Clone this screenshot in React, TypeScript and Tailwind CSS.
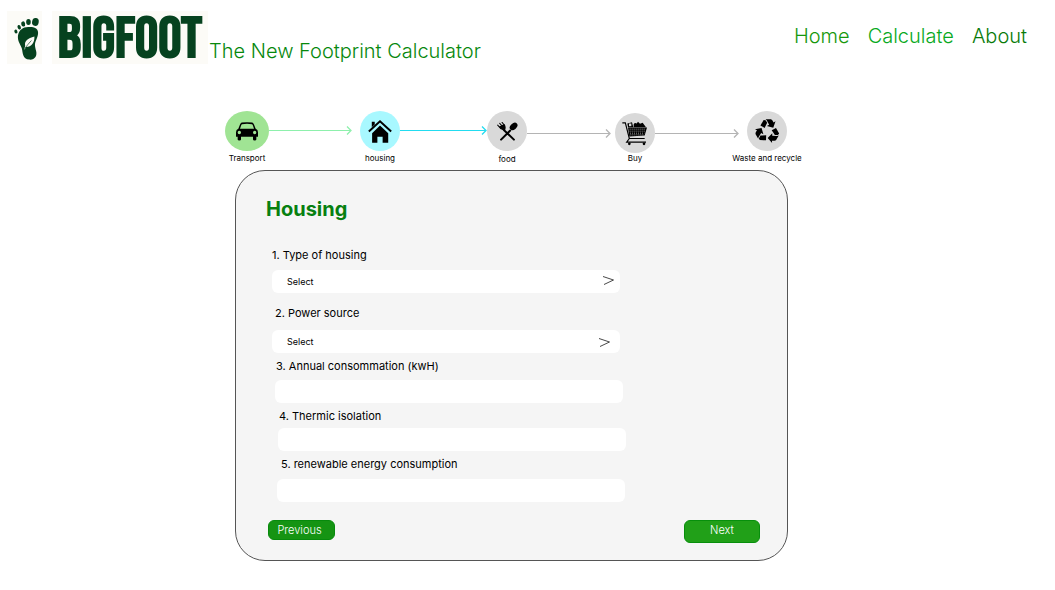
import type { ReactNode } from "react";

function FootLogo() {
  return (
    <svg viewBox="0 0 106 160" className="h-[53px] w-[35px] bg-[#fcfbf7]" aria-hidden="true">
      <g fill="#06421f">
        <ellipse cx="86" cy="33" rx="10" ry="12" transform="rotate(12 86 33)" />
        <ellipse cx="65" cy="33" rx="7" ry="9" />
        <ellipse cx="49" cy="39" rx="6" ry="8" transform="rotate(-12 49 39)" />
        <ellipse cx="37" cy="49" rx="5" ry="7" transform="rotate(-20 37 49)" />
        <ellipse cx="27" cy="62" rx="4.500" ry="6" transform="rotate(-25 27 62)" />
        <path d="M58 49C44 50 33 63 33 79C33 94 42 102 45 113C48 124 46 146 68 147C85 148 92 135 88 120C85 107 82 101 89 86C94 75 98 60 88 53C79 47 69 48 58 49Z" />
      </g>
      <path d="M83 77C63 82 52 91 55 105L52 118L58 109C74 109 84 95 83 77Z" fill="#fcfbf7" />
      <path d="M54 113Q63 101 74 89" stroke="#06421f" strokeWidth="2" fill="none" />
    </svg>
  );
}

function CarIcon() {
  return (
    <svg viewBox="0 0 66 56" className="h-[19px] w-[22px]" aria-hidden="true">
      <path
        fillRule="evenodd"
        d="M17 1Q33 -1 49 1Q52 2 54 7L59 20Q66 22 66 30V44H61V52Q61 55 56 55Q51 55 51 52V44H15V52Q15 55 10 55Q5 55 5 52V44H0V30Q0 22 7 20L12 7Q14 2 17 1ZM18 6Q16 7 15 11L12 20H54L51 11Q50 7 48 6Q33 4 18 6ZM10 26A5 5 0 1 0 10 36A5 5 0 1 0 10 26ZM56 26A5 5 0 1 0 56 36A5 5 0 1 0 56 26Z"
      />
    </svg>
  );
}

function HouseIcon() {
  return (
    <svg viewBox="0 0 72 70" className="h-[23px] w-6" aria-hidden="true">
      <path d="M11 5H20V14L11 22ZM36 17L61 40V69H44V51H28V69H12V40Z" />
      <path d="M2 35L36 4L70 35" fill="none" stroke="#000" strokeWidth="6" />
    </svg>
  );
}

function CutleryIcon() {
  return (
    <svg viewBox="0 0 62 56" className="h-[19px] w-[21px]" aria-hidden="true">
      <path d="M21 24L50 52M39 25L12 52" stroke="#000" strokeWidth="6" strokeLinecap="round" />
      <ellipse cx="49" cy="13" rx="9" ry="13" transform="rotate(48 49 13)" />
      <path
        d="M2 9L12 20M8 4L18 15M15 1L23 11"
        stroke="#000"
        strokeWidth="3"
        strokeLinecap="round"
      />
      <path d="M6 13L22 6Q27 14 25 22L20 26Q11 24 6 13Z" />
    </svg>
  );
}

function CartIcon() {
  return (
    <svg viewBox="0 0 78 74" className="h-[25px] w-[26px]" aria-hidden="true">
      <path d="M16 7L30 3L34 18H18ZM35 10Q38 3 44 7L48 2L54 8L62 5L72 18H35Z" />
      <path d="M21 7H28V15H21Z" fill="#d9d9d9" />
      <path d="M18 19H75L68 43L22 46Z" />
      <path
        d="M23 24H71M23 30H69M24 36H67M25 41H65"
        stroke="#d9d9d9"
        strokeWidth="2"
        strokeDasharray="3 3"
      />
      <path d="M1 5H10L22 52L14 63H72M22 52H68" fill="none" stroke="#000" strokeWidth="3.500" />
      <circle cx="22" cy="68" r="4" />
      <circle cx="66" cy="68" r="4" />
    </svg>
  );
}

function RecycleIcon() {
  return (
    <svg viewBox="-39 -38 78 78" className="size-[25px]" aria-hidden="true">
      {[0, 120, 240].map((angle) => (
        <g key={angle} transform={`rotate(${angle})`}>
          <path d="M-22 -18L-12 -35L-6 -34L-1 -26L-9 -10Z" />
          <path d="M-6 -37H11L15 -34L19 -27L25 -31L18 -11L-2 -16L5 -20L-2 -33Z" />
        </g>
      ))}
    </svg>
  );
}

function Arrow({ className }: { className: string }) {
  return (
    <li aria-hidden="true" className={`flex h-[11px] min-w-4 items-center ${className}`}>
      <span className="-mr-1 h-px flex-1 bg-current" />
      <svg viewBox="0 0 6 11" className="h-[11px] w-[6px] shrink-0" fill="none" stroke="currentColor">
        <path d="M1 1.500L5 5.500L1 9.500" strokeWidth="1.300" />
      </svg>
    </li>
  );
}

function Step({
  label,
  circle,
  className,
  children,
}: {
  label: string;
  circle: string;
  className: string;
  children: ReactNode;
}) {
  return (
    <li className={`flex shrink-0 flex-col items-center ${className}`}>
      <span className={`flex h-10 items-center justify-center rounded-[50%] ${circle}`}>
        {children}
      </span>
      <span className="text-[8px] leading-[10px] whitespace-nowrap">{label}</span>
    </li>
  );
}

const fieldBox = "block h-[23px] w-full rounded-md bg-white text-[9px] text-black";

function SelectField({ id, label, labelClass, arrowClass, className }: {
  id: string;
  label: string;
  labelClass: string;
  arrowClass: string;
  className: string;
}) {
  return (
    <div className={`flex flex-col ${className}`}>
      <label htmlFor={id} className={`text-[11px] leading-4 ${labelClass}`}>
        {label}
      </label>
      <div className="relative">
        <select id={id} className={`${fieldBox} appearance-none px-[15px]`}>
          <option>Select</option>
        </select>
        <svg
          viewBox="0 0 11 9"
          className={`pointer-events-none absolute h-[9px] w-[11px] ${arrowClass}`}
          fill="none"
          stroke="#333"
          aria-hidden="true"
        >
          <path d="M0 0.500L10.500 4L1 8.500" strokeWidth="0.900" />
        </svg>
      </div>
    </div>
  );
}

function TextField({ id, label, labelClass, className }: {
  id: string;
  label: string;
  labelClass: string;
  className: string;
}) {
  return (
    <div className={`flex flex-col ${className}`}>
      <label htmlFor={id} className={`text-[11px] leading-4 ${labelClass}`}>
        {label}
      </label>
      <input id={id} type="text" className={`${fieldBox} px-[15px]`} />
    </div>
  );
}

export default function App() {
  return (
    <div className="min-h-screen bg-white pb-7 font-['Inter',sans-serif] text-black">
      <header className="flex items-start justify-between pt-[11px] pr-7 pl-[7px]">
        <div className="flex items-start">
          <FootLogo />
          <span className="mr-px ml-[10px] flex h-[53px] min-w-[156px] items-center justify-center bg-[#fcfbf7] pt-1 font-['Bebas_Neue','Liberation_Sans_Narrow',sans-serif] text-[58px] leading-none font-bold text-[#06421f]">
            BIGFOOT
          </span>
          <p className="mt-7 text-[20px] leading-6 font-light text-[#07880d]">
            The New Footprint Calculator
          </p>
        </div>
        <nav className="mt-[13px] flex gap-[18px] text-[20px] leading-6 font-light">
          <a href="#home" className="text-[#16980c]">Home</a>
          <a href="#calculate" className="text-[#08a922]">Calculate</a>
          <a href="#about" className="text-[#087a08]">About</a>
        </nav>
      </header>

      <ol className="mt-[47px] mr-[268px] ml-[225px] flex items-start">
        <Step label="Transport" circle="w-11 bg-[#a0e494]" className="w-11 gap-[2px]">
          <CarIcon />
        </Step>
        <Arrow className="mt-[14px] mr-2 flex-[83] text-[#8df0ac]" />
        <Step label="housing" circle="w-10 bg-[#a8f8ff]" className="w-10 gap-[2px]">
          <HouseIcon />
        </Step>
        <Arrow className="mt-[14px] flex-[87] text-[#22dcf0]" />
        <Step label="food" circle="w-10 bg-[#d9d9d9]" className="w-10 gap-[3px]">
          <CutleryIcon />
        </Step>
        <Arrow className="mt-[17px] mr-1 flex-[84] text-[#b4b4b4]" />
        <Step label="Buy" circle="w-10 bg-[#d9d9d9]" className="mt-[2px] w-10">
          <CartIcon />
        </Step>
        <Arrow className="mt-[17px] mr-2 flex-[84] text-[#b4b4b4]" />
        <Step label="Waste and recycle" circle="w-10 bg-[#d9d9d9]" className="w-10 gap-[2px]">
          <RecycleIcon />
        </Step>
      </ol>

      <main className="mt-[6px] mr-[267px] ml-[235px] rounded-[30px] border border-[#555] bg-[#f5f5f5] pt-[26px] pr-[27px] pb-[17px] pl-[30px]">
        <h1 className="text-[20px] leading-6 font-bold text-[#078010]">Housing</h1>
        <form className="mt-[26px]">
          <div className="ml-[6px] max-w-[354px]">
            <SelectField id="type" label="1. Type of housing" labelClass="mb-[7px]" arrowClass="top-[6px] right-[6px]" className="mr-[6px]" />
            <SelectField id="power" label="2. Power source" labelClass="mb-[9px] pl-[3px]" arrowClass="top-[8px] right-[10px]" className="mt-3 mr-[6px]" />
            <TextField id="annual" label="3. Annual consommation (kwH)" labelClass="mb-[6px] pl-px" className="mt-[5px] mr-[3px] ml-[3px]" />
            <TextField id="thermic" label="4. Thermic isolation" labelClass="mb-1 pl-px" className="mt-[5px] ml-[6px]" />
            <TextField id="renewable" label="5. renewable energy consumption" labelClass="mb-[7px] pl-1" className="mt-[5px] mr-px ml-[5px]" />
          </div>
          <div className="mt-[18px] ml-[2px] flex items-start justify-between">
            <button type="button" className="h-5 w-[67px] rounded-md border border-[#078a0c] bg-[#159413] pr-1 text-[11px] leading-[18px] font-light text-white">
              Previous
            </button>
            <button type="button" className="h-[23px] w-[76px] rounded-md border border-[#078f0c] bg-[#21a018] pb-[3px] text-[11px] leading-[18px] font-light text-white">
              Next
            </button>
          </div>
        </form>
      </main>
    </div>
  );
}
